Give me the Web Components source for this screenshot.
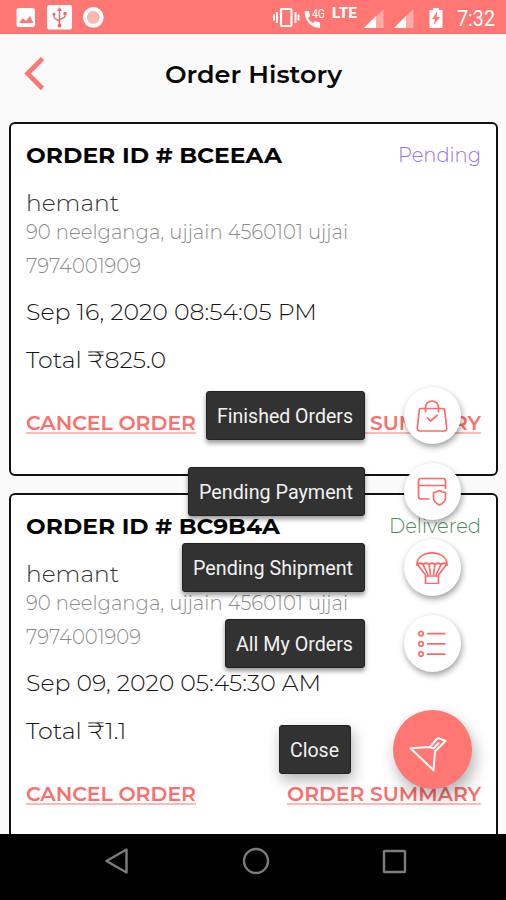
<!DOCTYPE html>
<html lang="en">
<head>
<meta charset="utf-8">
<title>Order History</title>
<style>
html, body {
  margin: 0;
  height: 100%;
  overflow: hidden;
  background: #fafafa;
}
</style>
</head>
<body>
<order-app>
  <order-card code="BCEEAA" code-width="256" status="Pending" status-width="83" color="#9370e8"
    date="Sep 16, 2020 08:54:05 PM" date-width="291" total="₹825.0" total-width="140"></order-card>
  <order-card code="BC9B4A" code-width="254" status="Delivered" status-width="92" color="#4f8a58"
    date="Sep 09, 2020 05:45:30 AM" date-width="295" total="₹1.1" total-width="100.5"></order-card>
</order-app>

<script>
function makeTemplate(html) {
  const template = document.createElement('template');
  template.innerHTML = html;
  return template;
}

// A single line of text, stretched to the width attribute
const LINE = makeTemplate(/* html */ `
<style>
:host {
  display: block;
  flex: none;
  white-space: nowrap;
}
span {
  display: inline-block;
  transform-origin: 0 50%;
}
:host([underline]) span {
  text-decoration: underline 1.500px #ffb9b7;
  text-decoration-skip-ink: none;
  text-underline-offset: 2px;
}
</style>
<span><slot></slot></span>
`);

class TextLineElement extends HTMLElement {
  constructor() {
    super();
    this.attachShadow({ mode: 'open' }).appendChild(LINE.content.cloneNode(true));
  }

  connectedCallback() {
    this.#fit();
  }

  #fit() {
    const width = Number(this.getAttribute('width'));
    const span = this.shadowRoot.querySelector('span');
    this.style.width = width + 'px';
    if (span.offsetWidth > 0) {
      span.style.transform = `scaleX(${width / span.getBoundingClientRect().width})`;
    }
  }
}

const STATUS = makeTemplate(/* html */ `
<style>
:host {
  display: flex;
  flex: none;
  align-items: flex-start;
  box-sizing: border-box;
  height: 34px;
  padding: 5px 11px 0 16px;
  background: #ff7672;
  color: #fff;
  font-family: Roboto, sans-serif;
}
svg {
  display: block;
  flex: none;
}
.space { flex: 1; }
.call {
  display: flex;
  width: 21px;
  margin: 2px 7px 0 4px;
}
.call text-line {
  margin-left: -9px;
  font-size: 12.500px;
  line-height: 13px;
}
.lte {
  font-size: 14.500px;
  font-weight: 800;
  line-height: 17px;
}
.time {
  font-size: 22px;
  line-height: 27px;
}
</style>
<svg width="20" height="24" viewBox="0 0 20 24"><rect x=".5" y="3" width="18.5" height="19" rx="2.5" fill="#fff"/><path d="M3 18l4-5 3 3 4-5 3.500 7z" fill="#ff7672"/></svg>
<svg width="25" height="25" viewBox="0 0 25 25" style="margin-left:11px"><rect width="25" height="24.500" rx="2" fill="#fff"/><g fill="none" stroke="#e96c70" stroke-width="1.400"><path d="M12.500 4v17M7 9v3c0 3 5.500 2 5.500 5M18 8v3c0 3-5.500 2-5.500 4"/></g><g fill="#e96c70"><path d="M12.500 2l2.500 4h-5z"/><circle cx="12.500" cy="20.500" r="2"/><circle cx="7" cy="9" r="1.600"/><rect x="16.500" y="7" width="3" height="3"/></g></svg>
<svg width="22" height="24" viewBox="0 0 22 24" style="margin-left:10px"><circle cx="11.300" cy="12.300" r="10.400" fill="#fff"/><circle cx="11.300" cy="12.300" r="6.500" fill="#ffb7b4"/></svg>
<span class="space"></span>
<svg width="27" height="24" viewBox="0 0 27 24" fill="none" stroke="#fff"><rect x="8" y="4" width="10.500" height="17" rx="1" stroke-width="2.200"/><path d="M1 9.500v6M4 7v11M22.500 7v11M25.500 9.500v6" stroke-width="2"/></svg>
<div class="call">
  <svg width="17" height="22" viewBox="0 0 17 22"><path d="M1 4h4l1 5-2 2q2 4 5 5l2-2 5 1.500V21Q2 20 .500 5z" fill="#fff"/></svg>
  <text-line width="13">4G</text-line>
</div>
<text-line class="lte" width="25">LTE</text-line>
<svg width="20" height="24" viewBox="0 0 20 24" style="margin-left:7px"><path d="M0 23L19.500 4v19z" fill="#ffaaa7"/><path d="M0 23L12 11v12z" fill="#fff"/></svg>
<svg width="20" height="24" viewBox="0 0 20 24" style="margin-left:10px"><path d="M0 23L19.500 4v19z" fill="#ffaaa7"/><path d="M0 23L12 11v12z" fill="#fff"/></svg>
<svg width="14" height="24" viewBox="0 0 14 24" style="margin:0 14px 0 15px"><path d="M.500 5H4V3h6v2h3.500v18H.500z" fill="#fff"/><path d="M8.500 6L3 14h3l-1 6 6-8H7.500z" fill="#ff7672"/></svg>
<text-line class="time" width="38">7:32</text-line>
`);

class StatusBarElement extends HTMLElement {
  constructor() {
    super();
    this.attachShadow({ mode: 'open' }).appendChild(STATUS.content.cloneNode(true));
  }
}

const HEADER = makeTemplate(/* html */ `
<style>
:host {
  display: grid;
  flex: none;
  grid-template-columns: 165px auto;
  align-items: start;
  box-sizing: border-box;
  height: 88px;
  padding-top: 23px;
  color: #0a0a0a;
  font-size: 24px;
  font-weight: 600;
  line-height: 36px;
}
svg {
  display: block;
  margin-left: 23px;
}
</style>
<svg width="24" height="34" viewBox="0 0 24 34" fill="none" stroke="#ff7672" stroke-width="4.600"><path d="M19.500 1.500L4.500 16.500l15 15"/></svg>
<text-line width="177"><slot></slot></text-line>
`);

class AppHeaderElement extends HTMLElement {
  constructor() {
    super();
    this.attachShadow({ mode: 'open' }).appendChild(HEADER.content.cloneNode(true));
  }
}

const CARD_STYLE = /* css */ `
:host {
  display: flex;
  flex: none;
  flex-direction: column;
  box-sizing: border-box;
  height: 354px;
  padding: 17px 15px 0;
  border: 2px solid #111;
  border-radius: 6px;
  background: #fff;
  color: #161616;
  font-weight: 300;
}
.row {
  display: flex;
  justify-content: space-between;
}
.id {
  color: #050505;
  font-size: 22.500px;
  font-weight: 700;
  line-height: 28px;
}
.status {
  font-size: 20px;
  line-height: 29px;
}
.name {
  margin-top: 19px;
  color: #333;
  font-size: 23.500px;
  line-height: 28px;
}
.address, .phone {
  margin-top: 3px;
  color: #8c8c8c;
  font-size: 20px;
  line-height: 24px;
}
.phone { margin-top: 10px; }
.date, .total {
  margin-top: 20px;
  font-size: 23.500px;
  line-height: 27px;
}
.total { margin-top: 21px; }
.links {
  margin-top: 38px;
  color: #f9706d;
  font-size: 20px;
  font-weight: 600;
  line-height: 24px;
}
`;

class OrderCardElement extends HTMLElement {
  constructor() {
    super();
    this.attachShadow({ mode: 'open' });
  }

  connectedCallback() {
    const get = (name) => this.getAttribute(name);
    this.shadowRoot.innerHTML = /* html */ `
      <style>${CARD_STYLE}</style>
      <div class="row">
        <text-line class="id" width="${get('code-width')}">ORDER ID # ${get('code')}</text-line>
        <text-line class="status" width="${get('status-width')}" style="color:${get('color')}">${get('status')}</text-line>
      </div>
      <text-line class="name" width="93">hemant</text-line>
      <text-line class="address" width="322">90 neelganga, ujjain 4560101 ujjai</text-line>
      <text-line class="phone" width="115">7974001909</text-line>
      <text-line class="date" width="${get('date-width')}">${get('date')}</text-line>
      <text-line class="total" width="${get('total-width')}">Total ${get('total')}</text-line>
      <div class="row links">
        <text-line underline width="170">CANCEL ORDER</text-line>
        <text-line underline width="194">ORDER SUMMARY</text-line>
      </div>
    `;
  }
}

// One label with its round button; the icon goes into the slot
const ACTION = makeTemplate(/* html */ `
<style>
:host {
  display: flex;
  align-items: center;
  gap: 39.500px;
}
.label {
  box-sizing: border-box;
  height: 49px;
  padding: 0 10.500px 0 10px;
  border: 1px solid #222;
  border-radius: 3px;
  background: #323232;
  box-shadow: 0 3px 5px rgb(0 0 0 / 42%);
  color: #f1f1f1;
  font: 20px/48px Roboto, sans-serif;
}
.button {
  display: grid;
  place-items: center;
  width: 57px;
  height: 57px;
  border-radius: 50%;
  background: #fff;
  box-shadow: 1px 3px 6px rgb(0 0 0 / 38%);
}
:host([main]) {
  gap: 42.500px;
  margin: 19px -11px 0 0;
}
:host([main]) .label {
  box-shadow: 2px 6px 14px rgb(0 0 0 / 30%);
}
:host([main]) .button {
  width: 79px;
  height: 79px;
  background: #ff7672;
  box-shadow: 3px 8px 15px rgb(0 0 0 / 30%);
}
</style>
<div class="label"></div>
<div class="button"><slot></slot></div>
`);

class DialActionElement extends HTMLElement {
  constructor() {
    super();
    this.attachShadow({ mode: 'open' }).appendChild(ACTION.content.cloneNode(true));
  }

  connectedCallback() {
    const line = document.createElement('text-line');
    line.setAttribute('width', this.getAttribute('width'));
    line.textContent = this.getAttribute('label');
    this.shadowRoot.querySelector('.label').replaceChildren(line);
  }
}

const DIAL = makeTemplate(/* html */ `
<style>
:host {
  display: flex;
  flex-direction: column;
  align-items: flex-end;
  gap: 19px;
}
svg {
  display: block;
  margin-left: -1px;
  fill: none;
  stroke: #fb6a68;
  stroke-width: 1.700;
}
</style>
<dial-action label="Finished Orders" width="136">
  <svg width="32" height="32" viewBox="0 0 32 32"><path d="M5 8.500h22q1.500 0 1.700 1.500l2 18q.300 3-2.700 3H4q-3 0-2.700-3l2-18Q3.500 8.500 5 8.500zM9.500 12.500V7.500a6.500 6.500 0 0 1 13 0v5M11 17.500l3.500 3.500 7-6"/></svg>
</dial-action>
<dial-action label="Pending Payment" width="154">
  <svg width="32" height="32" viewBox="0 0 32 32"><path d="M13.500 23H5q-2.500 0-2.500-2.500V5Q2.500 2.500 5 2.500h22q2.500 0 2.500 2.500v8M2.500 9.500h27M23.500 14.500q3 2 6 2v5q0 5-6 7.500-6-2.500-6-7.500v-5q3 0 6-2z"/></svg>
</dial-action>
<dial-action label="Pending Shipment" width="160">
  <svg width="32" height="32" viewBox="0 0 32 32"><path d="M1 12.500C1 5 8 .800 16 .800S31 5 31 12.500q-3-2.500-6 0-3-2.500-6 0-3-2.500-6 0-3-2.500-6 0-3-2.500-6 0zM1.500 12.500L9.500 23M7 12.500L12 23M13 12.500L14.500 23M19 12.500L17.500 23M25 12.500L20 23M30.500 12.500L22.500 23M9.500 24h13v7.500h-13z"/></svg>
</dial-action>
<dial-action label="All My Orders" width="117">
  <svg width="32" height="32" viewBox="0 0 32 32"><circle cx="5" cy="5.700" r="2.200"/><circle cx="5" cy="15.900" r="2.200"/><circle cx="5" cy="26.100" r="2.200"/><path d="M11 5.700h18.500M11 15.900h18.500M11 26.100h18.500"/></svg>
</dial-action>
<dial-action main label="Close" width="49">
  <svg width="79" height="79" viewBox="0 0 79 79" style="margin:0;stroke:#fff;stroke-width:2;stroke-linejoin:round"><path d="M17.500 38.300l19.500-1.300 6.700-8q1-1 2.500-.600l6.200 2.600-10.400 10.500-1.500 18.800zM37 37l3.500 1.500 5.500-6"/></svg>
</dial-action>
`);

class SpeedDialElement extends HTMLElement {
  constructor() {
    super();
    this.attachShadow({ mode: 'open' }).appendChild(DIAL.content.cloneNode(true));
  }
}

const NAV = makeTemplate(/* html */ `
<style>
:host {
  display: flex;
  flex: none;
  justify-content: space-between;
  align-items: center;
  box-sizing: border-box;
  height: 66px;
  padding: 0 98px 12px 103px;
  background: #000;
}
svg {
  fill: none;
  stroke: #7c7c7c;
  stroke-width: 2.400;
}
</style>
<svg width="28" height="28" viewBox="0 0 28 28"><path d="M23.500 2.500v23L3.500 14z" stroke-linejoin="round"/></svg>
<svg width="28" height="28" viewBox="0 0 28 28"><circle cx="14" cy="14" r="12"/></svg>
<svg width="28" height="28" viewBox="0 0 28 28"><rect x="4" y="4" width="21" height="21" rx=".500"/></svg>
`);

class NavBarElement extends HTMLElement {
  constructor() {
    super();
    this.attachShadow({ mode: 'open' }).appendChild(NAV.content.cloneNode(true));
  }
}

const APP = makeTemplate(/* html */ `
<style>
:host {
  display: flex;
  flex-direction: column;
  position: relative;
  width: 506px;
  height: 900px;
  overflow: hidden;
  background: #fafafa;
  font-family: Montserrat, Inter, sans-serif;
}
main {
  display: flex;
  flex: 1;
  flex-direction: column;
  gap: 17px;
  min-height: 0;
  padding: 0 8px 0 9px;
  overflow: hidden;
}
speed-dial {
  position: absolute;
  top: 387px;
  right: 45px;
}
</style>
<status-bar></status-bar>
<app-header>Order History</app-header>
<main><slot></slot></main>
<nav-bar></nav-bar>
<speed-dial></speed-dial>
`);

class OrderAppElement extends HTMLElement {
  constructor() {
    super();
    this.attachShadow({ mode: 'open' }).appendChild(APP.content.cloneNode(true));
  }
}

customElements.define('order-app', OrderAppElement);
customElements.define('status-bar', StatusBarElement);
customElements.define('app-header', AppHeaderElement);
customElements.define('order-card', OrderCardElement);
customElements.define('dial-action', DialActionElement);
customElements.define('speed-dial', SpeedDialElement);
customElements.define('nav-bar', NavBarElement);
// Last, so that every line is measured in its final place
customElements.define('text-line', TextLineElement);
</script>
</body>
</html>
